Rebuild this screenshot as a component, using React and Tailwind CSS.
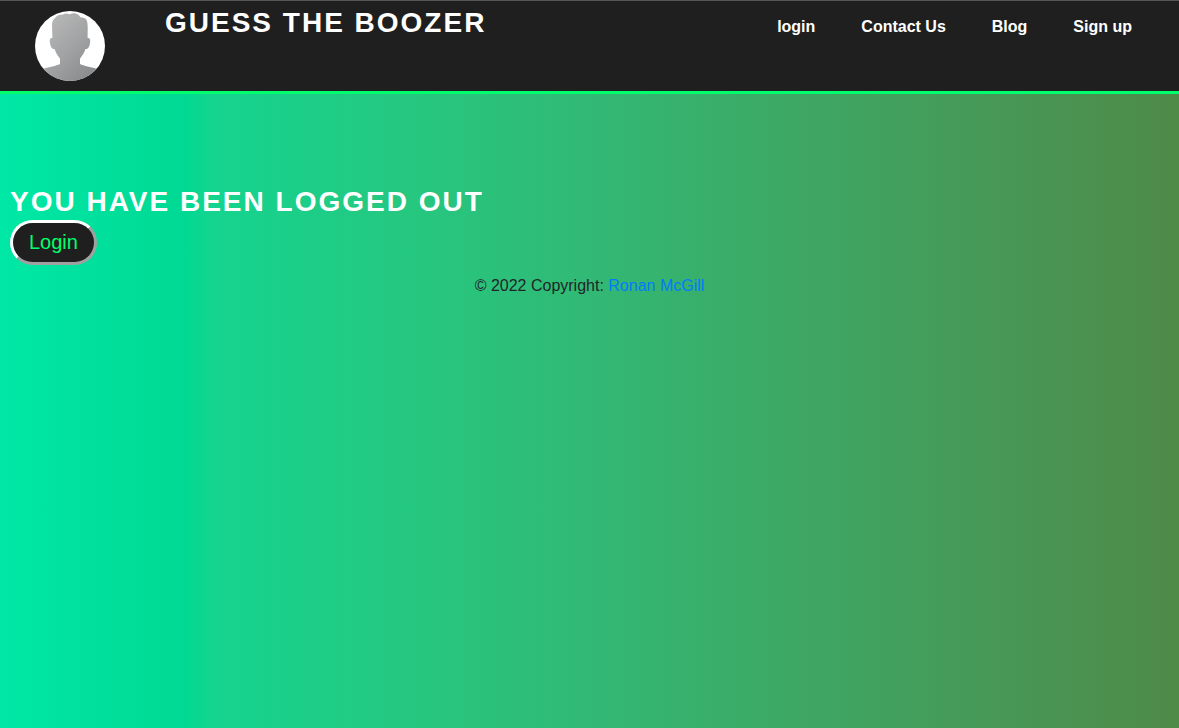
const links = ["login", "Contact Us", "Blog", "Sign up"];

function Avatar() {
  return (
    <svg viewBox="0 0 70 70" className="size-[70px]" role="img" aria-label="Profile">
      <defs>
        <linearGradient id="shade" x1="0" y1="0" x2="1" y2="1">
          <stop offset="0" stopColor="#c0c0c0" />
          <stop offset="0.5" stopColor="#a2a3a4" />
          <stop offset="1" stopColor="#808284" />
        </linearGradient>
        <clipPath id="disc">
          <circle cx="35" cy="35" r="35" />
        </clipPath>
      </defs>
      <g clipPath="url(#disc)">
        <rect width="70" height="70" fill="#fff" />
        <path
          fill="url(#shade)"
          d="M17.4 27 L17 14 C17 10.5 18 8.5 20 7 C21.5 4.5 24.5 3.4 28 3.4 C30 2.2 32.5 2.6 34.5 3.2 C36 2.4 39 1.8 41 2.4 C43.2 3.2 44.6 4.6 45.5 6.2 C47.5 6.8 50.5 6.6 51.6 9 C53.2 12.5 52.6 20 52.6 27 C55 26.4 55.6 29 55 32 C54.5 36 52.6 38.6 50.4 38 C49.4 42 47 45 45 47.5 L45 53 C49 55 56 56 61 57.5 L70 60 V70 H0 V60 L9 57.5 C14 56 21 55 25 53 L25 47.5 C23 45 20.6 42 19.6 38 C17.4 38.6 15.5 36 15 32 C14.4 29 15 26.4 17.4 27 Z"
        />
      </g>
    </svg>
  );
}

export default function App() {
  return (
    <div className="min-h-screen bg-[linear-gradient(90deg,#00e8a6_0%,#00d993_15.5%,#14d48f_18%,#25c880_34%,#32b874_51%,#3da864_67%,#479857_84%,#4e8a48_100%)] font-['Liberation_Sans',Arial,sans-serif] text-base text-[#212529]">
      <header className="flex items-start border-t border-b-3 border-t-[#54575a] border-b-[#00ff6c] bg-[#1f1f1f] pt-[10px] pr-6 pb-[10px] pl-[35px] text-white">
        <Avatar />
        <h1 className="ml-[60px] text-[28px] leading-6 font-bold tracking-[2px] uppercase">
          Guess the Boozer
        </h1>
        <nav className="ml-auto">
          <ul className="flex">
            {links.map((label) => (
              <li key={label}>
                <a href="#" className="block px-[23px] py-1 leading-6 font-bold">
                  {label}
                </a>
              </li>
            ))}
          </ul>
        </nav>
      </header>
      <main className="px-[10px] pt-[90px]">
        <h2 className="text-[28px] leading-9 font-bold tracking-[2px] text-white uppercase">
          You have been logged out
        </h2>
        <button
          type="button"
          className="block rounded-full border-3 border-white border-r-[#a0a0a0] border-b-[#a0a0a0] bg-[#1f1f1f] px-4 py-1 text-xl leading-[31px] text-[#00ff6c]"
        >
          Login
        </button>
      </main>
      <footer className="py-[9px] text-center leading-6">
        © 2022 Copyright:{" "}
        <a href="#" className="text-[#007bff]">
          Ronan McGill
        </a>
      </footer>
    </div>
  );
}
